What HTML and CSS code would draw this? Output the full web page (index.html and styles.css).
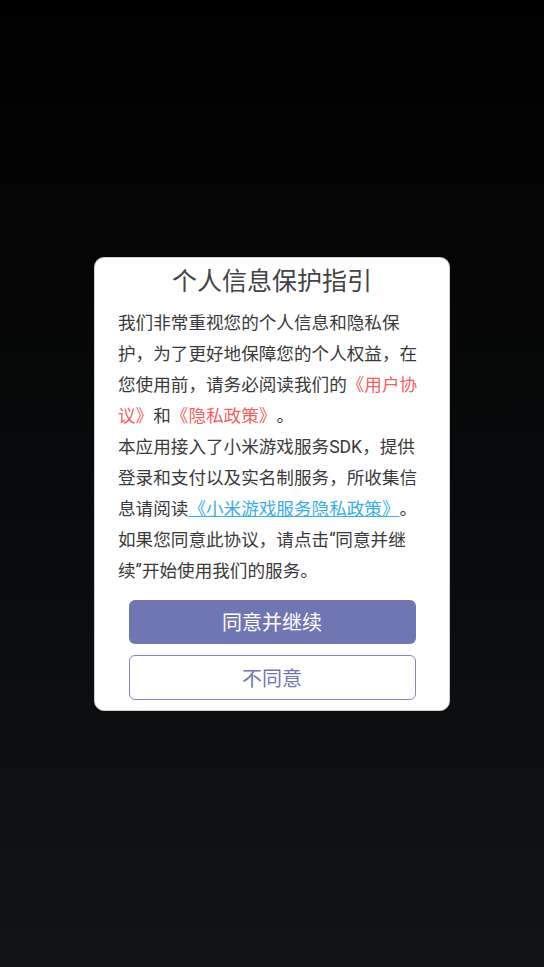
FILE: index.html
```html
<!DOCTYPE html>
<html lang="zh-CN">
<head>
    <meta charset="UTF-8">
    <meta name="viewport" content="width=device-width, initial-scale=1.0">
    <title>个人信息保护指引</title>
    <link rel="stylesheet" href="styles.css">
</head>
<body>
    <div class="dialog">
        <div class="title">个人信息保护指引</div>
        <div class="content">
            我们非常重视您的个人信息和隐私保护，为了更好地保障您的个人权益，在您使用前，请务必阅读我们的<a class="red">《用户协议》</a>和<a class="red">《隐私政策》</a>。<br>
            本应用接入了小米游戏服务SDK，提供登录和支付以及实名制服务，所收集信息请阅读<a class="blue">《小米游戏服务隐私政策》</a>。<br>
            如果您同意此协议，请点击“同意并继续”开始使用我们的服务。
        </div>
        <button class="button agree">同意并继续</button>
        <button class="button refuse">不同意</button>
    </div>
</body>
</html>
```

FILE: styles.css
```css
html, body {
    height: 100%;
}

body {
    font-family: Roboto, "Noto Sans CJK SC", sans-serif;
    margin: 0;
    padding: 0;
    display: flex;
    align-items: center;
    justify-content: center;
    background: linear-gradient(180deg, #000000, #111315);
}

.dialog {
    width: 356px;
    box-sizing: border-box;
    padding: 7px 23px 10px 23px;
    background: #fff;
    border: 1px solid #cfcfcf;
    border-radius: 10px;
    display: flex;
    flex-direction: column;
    align-items: center;
}

.title {
    font-size: 25px;
    line-height: 34px;
    color: #444;
    margin-bottom: 9px;
}

.content {
    align-self: stretch;
    font-size: 17.6px;
    line-height: 31px;
    color: #3a3a3a;
    margin-bottom: 13px;
    text-spacing-trim: space-all;
}

.red {
    color: #f25f5f;
}

.blue {
    color: #3aaee2;
    text-decoration: underline;
}

.button {
    width: 287px;
    height: 44px;
    font-family: inherit;
    font-size: 20px;
    border-radius: 6px;
    cursor: pointer;
}

.agree {
    color: #fff;
    background: #6f76b2;
    border: none;
    margin-bottom: 11px;
}

.refuse {
    height: 45px;
    color: #6f76b2;
    background: #fff;
    border: 1px solid #8289c2;
}
```
